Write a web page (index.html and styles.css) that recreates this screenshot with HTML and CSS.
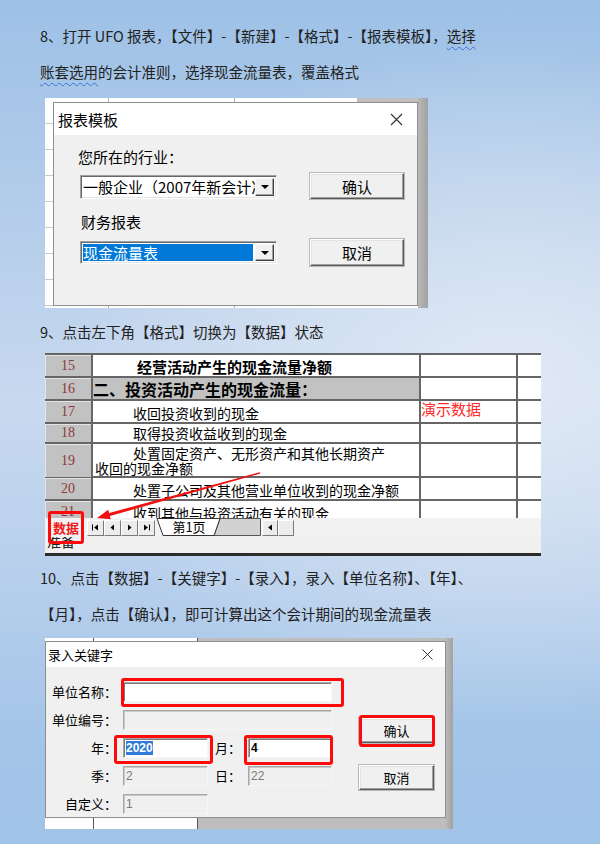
FILE: index.html
```html
<!DOCTYPE html>
<html lang="zh-CN">
<head>
    <meta charset="UTF-8">
    <meta name="viewport" content="width=device-width, initial-scale=1.0">
    <title>UFO 报表 - 现金流量表</title>
    <link rel="stylesheet" href="styles.css">
</head>
<body>
<div class="page">

    <!-- Step 8 -->
    <p class="step">8、打开 UFO 报表，【文件】-【新建】-【格式】-【报表模板】，<span class="typo">选择</span><br><span class="typo">账套选用</span>的会计准则，选择现金流量表，覆盖格式</p>

    <div class="shot shot-template">
        <div class="dlg">
            <div class="dlg-head">
                <span>报表模板</span>
                <svg class="close" width="13" height="13" viewBox="0 0 13 13"><path d="M1 1L12 12M12 1L1 12" stroke="#333" stroke-width="1.1"/></svg>
            </div>
            <div class="tpl-body">
                <div class="tpl-left">
                    <div class="tpl-label">您所在的行业：</div>
                    <div class="combo"><span class="combo-text">一般企业（2007年新会计准则）</span><span class="combo-arrow"></span></div>
                    <div class="tpl-label second">财务报表</div>
                    <div class="combo combo-low"><span class="combo-text sel">现金流量表</span><span class="combo-arrow"></span></div>
                </div>
                <div class="tpl-right">
                    <div class="btn tpl-ok">确认</div>
                    <div class="btn tpl-cancel">取消</div>
                </div>
            </div>
        </div>
    </div>

    <!-- Step 9 -->
    <p class="step">9、点击左下角【格式】切换为【数据】状态</p>

    <div class="shot shot-sheet">
        <div class="sheet">
            <div class="srow h23"><div class="rh">15</div><div class="cell strong">经营活动产生的现金流量净额</div><div class="cell"></div><div class="cell"></div></div>
            <div class="srow h23"><div class="rh">16</div><div class="cell section">二、投资活动产生的现金流量：</div><div class="cell"></div><div class="cell"></div></div>
            <div class="srow h23"><div class="rh">17</div><div class="cell">收回投资收到的现金</div><div class="cell"></div><div class="cell"></div></div>
            <div class="srow h20"><div class="rh">18</div><div class="cell">取得投资收益收到的现金</div><div class="cell"></div><div class="cell"></div></div>
            <div class="srow h34"><div class="rh">19</div><div class="cell two">处置固定资产、无形资产和其他长期资产<br>收回的现金净额</div><div class="cell"></div><div class="cell"></div></div>
            <div class="srow h23"><div class="rh">20</div><div class="cell">处置子公司及其他营业单位收到的现金净额</div><div class="cell"></div><div class="cell"></div></div>
            <div class="srow h23"><div class="rh">21</div><div class="cell">收到其他与投资活动有关的现金</div><div class="cell"></div><div class="cell"></div></div>
        </div>
        <div class="tabbar">
            <div class="tab-tag">数据</div>
            <div class="nav"><svg width="7" height="7" viewBox="0 0 7 7"><path d="M0.5 0.5V6.5" stroke="#000"/><path d="M6 0.5L2 3.5L6 6.5Z" fill="#000"/></svg></div>
            <div class="nav"><svg width="7" height="7" viewBox="0 0 7 7"><path d="M5 0.5L1.5 3.5L5 6.5Z" fill="#000"/></svg></div>
            <div class="nav"><svg width="7" height="7" viewBox="0 0 7 7"><path d="M2 0.5L5.5 3.5L2 6.5Z" fill="#000"/></svg></div>
            <div class="nav"><svg width="7" height="7" viewBox="0 0 7 7"><path d="M1 0.5L5 3.5L1 6.5Z" fill="#000"/><path d="M6.5 0.5V6.5" stroke="#000"/></svg></div>
            <svg class="tabs" width="107" height="19" viewBox="0 0 107 19">
                <polygon points="65,0.5 105.5,0.5 105.5,17.5 59,17.5" fill="#d2d2d2" stroke="#555" stroke-width="1"/>
                <polygon points="2,0.5 65,0.5 59,17.5 8,17.5" fill="#fff" stroke="#333" stroke-width="1"/>
                <text x="34" y="14" text-anchor="middle" font-family="Noto Sans CJK SC, sans-serif" font-size="13" fill="#000">第1页</text>
            </svg>
            <div class="scroll"><svg width="6" height="7" viewBox="0 0 6 7"><path d="M5 0.5L1 3.5L5 6.5Z" fill="#000"/></svg></div>
            <div class="scroll"></div>
        </div>
        <div class="status"><span>准备</span></div>

        <!-- annotations -->
        <div class="demo-mark">演示数据</div>
        <div class="mark mark-data"></div>
        <svg class="arrow" width="496" height="203" viewBox="0 0 496 203">
            <polygon points="215,119.2 64.1,160 63.2,156.7 52,165 65.8,166.3 64.9,163 215.3,120.6" fill="#f01010"/>
        </svg>
    </div>

    <!-- Step 10 -->
    <p class="step">10、点击【数据】-【关键字】-【录入】，录入【单位名称】、【年】、<br>【月】，点击【确认】，即可计算出这个会计期间的现金流量表</p>

    <div class="shot shot-keys">
        <div class="dlg dlg-keys">
            <div class="dlg-head">
                <span>录入关键字</span>
                <svg class="close" width="11" height="11" viewBox="0 0 11 11"><path d="M0.5 0.5L10.5 10.5M10.5 0.5L0.5 10.5" stroke="#333" stroke-width="1"/></svg>
            </div>
            <div class="keys-body">
                <div class="keys-form">
                    <label class="kl">单位名称：</label><div class="field wide"></div>
                    <label class="kl">单位编号：</label><div class="field wide off"></div>
                    <label class="kl">年：</label><div class="field"><span class="hl">2020</span></div>
                    <label class="kl kl-2">月：</label><div class="field"><b>4</b></div>
                    <label class="kl">季：</label><div class="field off">2</div>
                    <label class="kl kl-2">日：</label><div class="field off">22</div>
                    <label class="kl">自定义：</label><div class="field off">1</div>
                </div>
                <div class="keys-btns">
                    <div class="btn keys-ok">确认</div>
                    <div class="btn keys-cancel">取消</div>
                </div>
            </div>
        </div>

        <!-- annotations -->
        <div class="mark mark-name"></div>
        <div class="mark mark-year"></div>
        <div class="mark mark-month"></div>
        <div class="mark mark-ok"></div>
    </div>

</div>
</body>
</html>
```

FILE: styles.css
```css
* {
    box-sizing: border-box;
}

html, body {
    margin: 0;
    padding: 0;
}

body {
    width: 600px;
    height: 844px;
    overflow: hidden;
    font-family: "Noto Sans CJK SC", "Noto Sans", sans-serif;
    color: #222;
    background:
        radial-gradient(ellipse 75% 40% at 85% 45%, rgba(226, 234, 245, 0.95) 0%, rgba(226, 234, 245, 0) 100%),
        linear-gradient(to bottom, #9dc1e6 0%, #b8cfeb 30%, #c8d9ef 48%, #b7cfec 68%, #a3c5e8 88%, #a0c3e8 100%);
}

.page {
    padding: 18px 0 0 40px;
}

/* Paragraph text */
.step {
    margin: 0;
    font-size: 14.5px;
    line-height: 36px;
    white-space: nowrap;
}

.typo {
    text-decoration: underline wavy #3f6fd8;
    text-decoration-thickness: 1px;
    text-underline-offset: 4px;
}

/* Screenshot frames */
.shot {
    position: relative;
    margin-left: 5px;
}

.shot-template {
    width: 383px;
    height: 210px;
    margin-top: 8px;
    margin-bottom: 6px;
    padding: 4px 10px 2px 8px;
    background:
        linear-gradient(to left, #a2a2a2, #b8b8b8) right top / 10px 100% no-repeat,
        linear-gradient(#c0c0c0, #c0c0c0) 312px 0 / 61px 4px no-repeat,
        linear-gradient(#b0b0b0, #b0b0b0) 63px 0 / 1px 100% no-repeat,
        linear-gradient(#b0b0b0, #b0b0b0) 189px 0 / 1px 100% no-repeat,
        repeating-linear-gradient(to bottom, #fff 0 25px, #c8c8c8 25px 26px);
}

/* Windows dialog */
.dlg {
    height: 100%;
    background: #f0f0f0;
    border: 1px solid #8e8e8e;
    color: #000;
}

.dlg-head {
    display: flex;
    align-items: center;
    justify-content: space-between;
    background: #fff;
    height: 32px;
    padding: 0 14px 0 4px;
    font-size: 15px;
}

.tpl-body {
    display: flex;
    padding: 11px 0 0 24px;
}

.tpl-left {
    width: 199px;
}

.tpl-label {
    height: 22px;
    line-height: 22px;
    font-size: 15px;
}

.tpl-label.second {
    margin: 12px 0 0 3px;
}

.combo {
    display: flex;
    width: 197px;
    height: 24px;
    margin: 7px 0 0 2px;
    padding: 2px;
    background: #fff;
    border: 1px solid;
    border-color: #a0a0a0 #fff #fff #a0a0a0;
    box-shadow: inset 1px 1px 0 #696969, inset -1px -1px 0 #e3e3e3;
}

.combo-low {
    height: 23px;
    margin-top: 8px;
}

.combo-text {
    flex: 1;
    overflow: hidden;
    white-space: nowrap;
    font-size: 15px;
    line-height: 18px;
}

.combo-text.sel {
    background: #0078d7;
    color: #fff;
    margin-right: 2px;
}

.combo-arrow {
    width: 19px;
    display: flex;
    align-items: center;
    justify-content: center;
    background: #f0f0f0;
    border: 1px solid;
    border-color: #f8f8f8 #404040 #404040 #f8f8f8;
    box-shadow: inset -1px -1px 0 #a0a0a0;
}

.combo-arrow::before {
    content: "";
    border-left: 4px solid transparent;
    border-right: 4px solid transparent;
    border-top: 4px solid #000;
}

.tpl-right {
    margin-left: 33px;
    width: 94px;
}

.btn {
    display: flex;
    align-items: center;
    justify-content: center;
    background: #f0f0f0;
    border: 1px solid;
    border-color: #fff #5a5a5a #5a5a5a #fff;
    box-shadow: inset -1px -1px 0 #a0a0a0, inset 1px 1px 0 #e3e3e3, 0 0 0 1px #b8b8b8;
    font-size: 15px;
}

.tpl-ok {
    height: 26px;
    margin-top: 27px;
}

.tpl-cancel {
    height: 27px;
    margin-top: 40px;
}

/* Spreadsheet */
.shot-sheet {
    width: 496px;
    height: 203px;
    margin-top: 3px;
    margin-bottom: 4px;
    overflow: hidden;
    background: #fff;
    border-bottom: 3px solid #2c2c2c;
}

.sheet {
    height: 165px;
    overflow: hidden;
    border-top: 2px solid #666;
}

.srow {
    display: grid;
    grid-template-columns: 48px 328px 97px 1fr;
    border-bottom: 2px solid #666;
}

.h20 { height: 20px; }
.h23 { height: 23px; }
.h34 { height: 34px; }

.rh {
    display: flex;
    align-items: center;
    justify-content: center;
    background: #c2c2c2;
    box-shadow: inset 1px 1px 0 #e4e4e4;
    border-right: 2px solid #666;
    color: #8c3b3b;
    font-family: "Liberation Serif", serif;
    font-size: 14px;
}

.cell {
    display: flex;
    align-items: flex-end;
    padding: 0 0 1px 2px;
    text-indent: 38px;
    font-size: 14px;
    line-height: 16px;
    color: #000;
    white-space: nowrap;
    border-right: 2px solid #666;
}

.cell:last-child {
    border-right: none;
}

.cell.strong {
    font-weight: bold;
    font-size: 15px;
    text-indent: 42px;
}

.cell.section {
    background: #c2c2c2;
    font-weight: bold;
    font-size: 16px;
    text-indent: 0;
    padding-left: 0;
    line-height: 18px;
}

.cell.two {
    display: block;
    padding-top: 2px;
    line-height: 15px;
}

.tabbar {
    display: flex;
    align-items: center;
    height: 19px;
    background: #f2f2f2;
}

.tab-tag {
    width: 42px;
    padding-left: 8px;
    color: #f01818;
    font-size: 13px;
    font-weight: bold;
}

.nav,
.scroll {
    display: flex;
    align-items: center;
    justify-content: center;
    width: 17px;
    height: 16px;
    background: #ececec;
    border: 1px solid;
    border-color: #fff #7a7a7a #7a7a7a #fff;
}

.tabs {
    display: block;
}

.scroll {
    width: 16px;
}

.scroll:first-of-type {
    margin-left: 5px;
}

.status {
    height: 16px;
    overflow: hidden;
    background: #f0f0f0;
    padding-left: 2px;
    font-size: 14px;
    line-height: 16px;
    color: #222;
}

.status span {
    display: block;
    margin-top: -4px;
}

.demo-mark {
    position: absolute;
    left: 376px;
    top: 46px;
    color: #ff2b2b;
    font-size: 15px;
    line-height: 20px;
}

.arrow {
    position: absolute;
    left: 0;
    top: 0;
}

/* Red annotation boxes */
.mark {
    position: absolute;
    border: 3px solid #ff0a0a;
    border-radius: 3px;
}

.mark-data  { left: 3px;   top: 158px; width: 36px;  height: 33px; }
.mark-name  { left: 76px;  top: 40px;  width: 223px; height: 29px; }
.mark-year  { left: 69px;  top: 97px;  width: 99px;  height: 29px; }
.mark-month { left: 199px; top: 97px;  width: 89px;  height: 30px; }
.mark-ok    { left: 314px; top: 77px;  width: 76px;  height: 32px; }

/* Keyword dialog */
.shot-keys {
    width: 408px;
    height: 191px;
    margin-top: 6px;
    padding: 3px 7px 11px 0;
    background:
        linear-gradient(to left, #a2a2a2, #b8b8b8) right top / 7px 100% no-repeat,
        linear-gradient(#555, #555) 48px 0 / 1px 100% no-repeat,
        linear-gradient(#555, #555) 152px 0 / 1px 100% no-repeat,
        linear-gradient(#bdbdbd, #bdbdbd) 153px 0 / 100% 100% no-repeat,
        #fff;
}

.dlg-keys .dlg-head {
    height: 25px;
    padding: 0 12px 0 2px;
    font-size: 13px;
}

.keys-body {
    display: flex;
    padding-top: 15px;
}

.keys-form {
    display: grid;
    grid-template-columns: 77px 85px 40px 84px;
    grid-auto-rows: 20px;
    row-gap: 8px;
}

.kl {
    text-align: right;
    padding-right: 6px;
    font-size: 13px;
    line-height: 20px;
    color: #000;
}

.kl-2 {
    padding-right: 7px;
}

.field {
    height: 20px;
    padding: 2px 2px;
    background: #fff;
    border: 1px solid;
    border-color: #a8a8a8 #f6f6f6 #f6f6f6 #a8a8a8;
    box-shadow: inset 1px 1px 0 #7a7a7a;
    font-family: "Liberation Sans", sans-serif;
    font-size: 12px;
    line-height: 14px;
    color: #000;
}

.field.wide {
    grid-column: 2 / 5;
}

.field.off {
    background: #f0f0f0;
    color: #7a7a7a;
    box-shadow: inset 1px 1px 0 #c8c8c8;
}

.hl {
    background: #2f7ad8;
    color: #fff;
    font-weight: bold;
}

.keys-btns {
    margin-left: 27px;
    width: 75px;
}

.keys-ok {
    height: 25px;
    margin-top: 36px;
    font-size: 13px;
}

.keys-cancel {
    height: 25px;
    margin-top: 22px;
    font-size: 13px;
}
```
